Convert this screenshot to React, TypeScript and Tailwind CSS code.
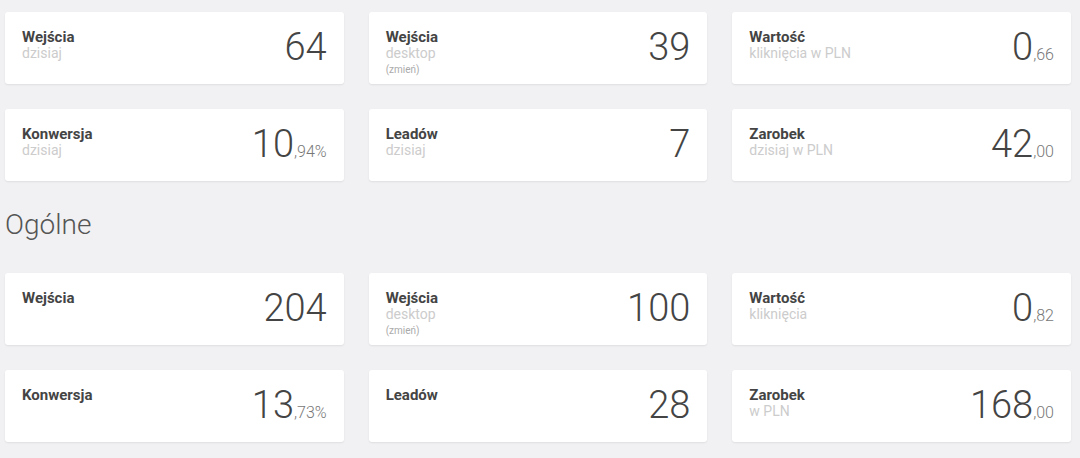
const TODAY = [
  { title: 'Wejścia', sub: 'dzisiaj', value: '64' },
  { title: 'Wejścia', sub: 'desktop', note: '(zmień)', value: '39' },
  { title: 'Wartość', sub: 'kliknięcia w PLN', value: '0', dec: ',66' },
  { title: 'Konwersja', sub: 'dzisiaj', value: '10', dec: ',94%' },
  { title: 'Leadów', sub: 'dzisiaj', value: '7' },
  { title: 'Zarobek', sub: 'dzisiaj w PLN', value: '42', dec: ',00' },
]

const TOTAL = [
  { title: 'Wejścia', value: '204' },
  { title: 'Wejścia', sub: 'desktop', note: '(zmień)', value: '100' },
  { title: 'Wartość', sub: 'kliknięcia', value: '0', dec: ',82' },
  { title: 'Konwersja', value: '13', dec: ',73%' },
  { title: 'Leadów', value: '28' },
  { title: 'Zarobek', sub: 'w PLN', value: '168', dec: ',00' },
]

type Stat = { title: string; sub?: string; note?: string; value: string; dec?: string }

function StatCard({ s }: { s: Stat }) {
  return (
    <div className="h-[72px] bg-white rounded-[3px] shadow-[0_1px_2px_rgba(0,0,0,0.08)] flex justify-between pl-[17px] pr-[17px]">
      <div className="pt-[17px] flex flex-col">
        <span className="text-[15px] leading-[16px] font-bold text-[#444]">{s.title}</span>
        {s.sub && <span className="text-[14px] leading-[16px] text-[#cccccc]">{s.sub}</span>}
        {s.note && <span className="text-[10px] leading-[14px] mt-[2px] text-[#aaa]">{s.note}</span>}
      </div>
      <div className="pt-[16px] text-[#444] font-light whitespace-nowrap">
        <span className="text-[38px] leading-[38px]">{s.value}</span>
        {s.dec && <span className="text-[16px] leading-[16px] text-[#777]">{s.dec}</span>}
      </div>
    </div>
  )
}

export default function App() {
  return (
    <div className="min-h-[458px] bg-[#f1f1f3] pl-[5px] pr-[9px] pt-[12px]" style={{ fontFamily: 'Roboto, "Liberation Sans", sans-serif' }}>
      <div className="grid grid-cols-3 gap-x-[25px] gap-y-[25px]">
        {TODAY.map((s, i) => (
          <StatCard key={i} s={s} />
        ))}
      </div>
      <h2 className="text-[28px] leading-[32px] font-light text-[#555] mt-[28px] mb-[32px]">Ogólne</h2>
      <div className="grid grid-cols-3 gap-x-[25px] gap-y-[25px]">
        {TOTAL.map((s, i) => (
          <StatCard key={i} s={s} />
        ))}
      </div>
    </div>
  )
}
